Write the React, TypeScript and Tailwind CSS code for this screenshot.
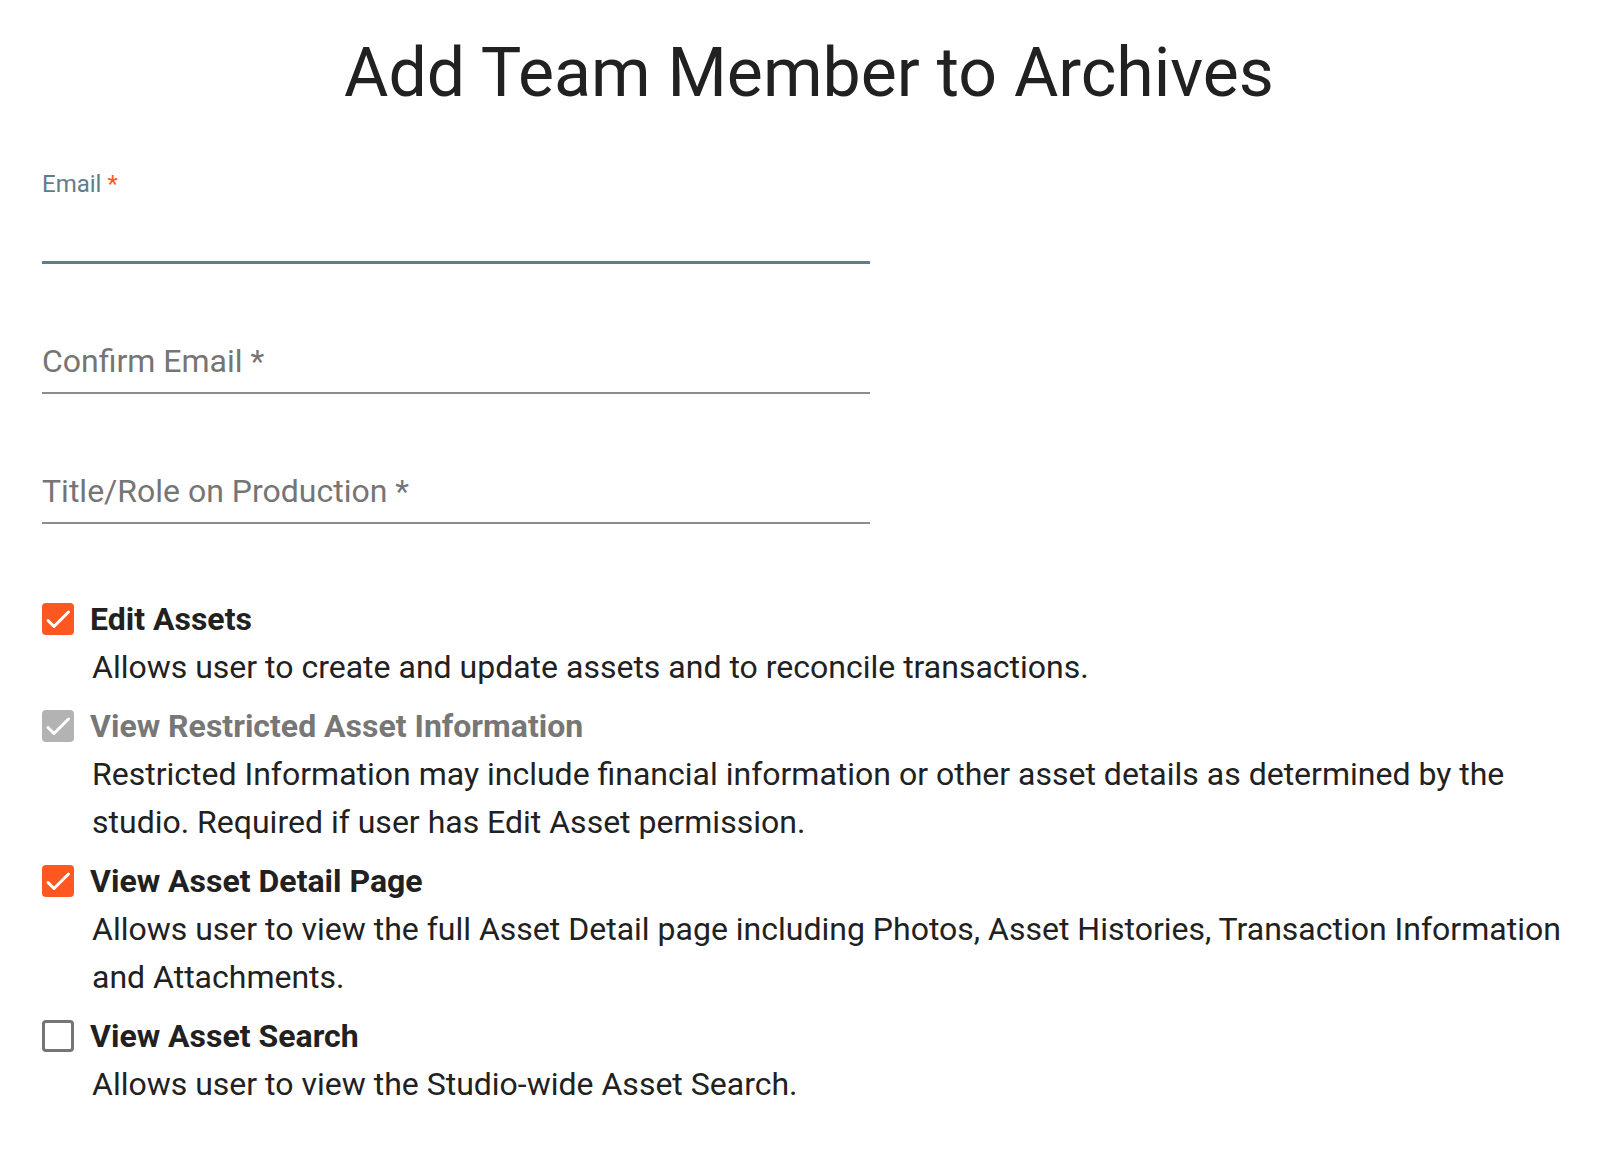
import React from "react";

const FONT = { fontFamily: "Roboto, 'Liberation Sans', sans-serif" };

type Perm = {
  title: string;
  desc: string;
  state: "on" | "off" | "locked";
};

const PERMS: Perm[] = [
  {
    title: "Edit Assets",
    desc: "Allows user to create and update assets and to reconcile transactions.",
    state: "on",
  },
  {
    title: "View Restricted Asset Information",
    desc: "Restricted Information may include financial information or other asset details as determined by the studio. Required if user has Edit Asset permission.",
    state: "locked",
  },
  {
    title: "View Asset Detail Page",
    desc: "Allows user to view the full Asset Detail page including Photos, Asset Histories, Transaction Information and Attachments.",
    state: "on",
  },
  {
    title: "View Asset Search",
    desc: "Allows user to view the Studio-wide Asset Search.",
    state: "off",
  },
];

function Check() {
  return (
    <svg viewBox="0 0 32 32" className="h-8 w-8">
      <path d="M6 17.5l6 6L26.5 9" fill="none" stroke="white" strokeWidth="3" strokeLinecap="round" strokeLinejoin="round" />
    </svg>
  );
}

function Box({ state }: { state: Perm["state"] }) {
  if (state === "off")
    return <div className="h-8 w-8 shrink-0 rounded-[4px] border-[3px] border-[#757575] bg-white" />;
  return (
    <div
      className={
        state === "on"
          ? "h-8 w-8 shrink-0 rounded-[4px] bg-[#ff5722]"
          : "h-8 w-8 shrink-0 rounded-[4px] bg-[#b3b3b3]"
      }
    >
      <Check />
    </div>
  );
}

export default function App() {
  return (
    <div className="min-h-screen bg-white px-[42px] pt-[33px] text-[#212121]" style={FONT}>
      <h1 className="text-center text-[68px] font-normal leading-[80px] text-[#212121]">
        Add Team Member to Archives
      </h1>

      <div className="mt-[57px] flex w-[828px] flex-col gap-[38px]">
        <div className="flex flex-col">
          <label className="text-[24px] leading-[28px] text-[#607d8b]">
            Email <span className="text-[#ff5722]">*</span>
          </label>
          <input
            type="email"
            className="h-[66px] border-b-[3px] border-[#607d8b] bg-transparent text-[32px] outline-none"
          />
        </div>
        <div className="flex flex-col pt-[28px]">
          <input
            placeholder="Confirm Email *"
            className="h-[64px] border-b-2 border-[#8c8c8c] bg-transparent text-[32px] outline-none placeholder:text-[#757575]"
          />
        </div>
        <div className="flex flex-col pt-[28px]">
          <input
            placeholder="Title/Role on Production *"
            className="h-[64px] border-b-2 border-[#8c8c8c] bg-transparent text-[32px] outline-none placeholder:text-[#757575]"
          />
        </div>
      </div>

      <div className="mt-[71px] flex flex-col gap-[11px]">
        {PERMS.map((p) => (
          <div key={p.title} className="flex flex-col">
            <div className="flex items-center gap-[16px]">
              <Box state={p.state} />
              <span
                className={
                  p.state === "locked"
                    ? "text-[32px] font-bold leading-[48px] text-[#777777]"
                    : "text-[32px] font-bold leading-[48px] text-[#212121]"
                }
              >
                {p.title}
              </span>
            </div>
            <p className="pl-[50px] text-[32px] leading-[48px] text-[#212121]">{p.desc}</p>
          </div>
        ))}
      </div>
    </div>
  );
}
